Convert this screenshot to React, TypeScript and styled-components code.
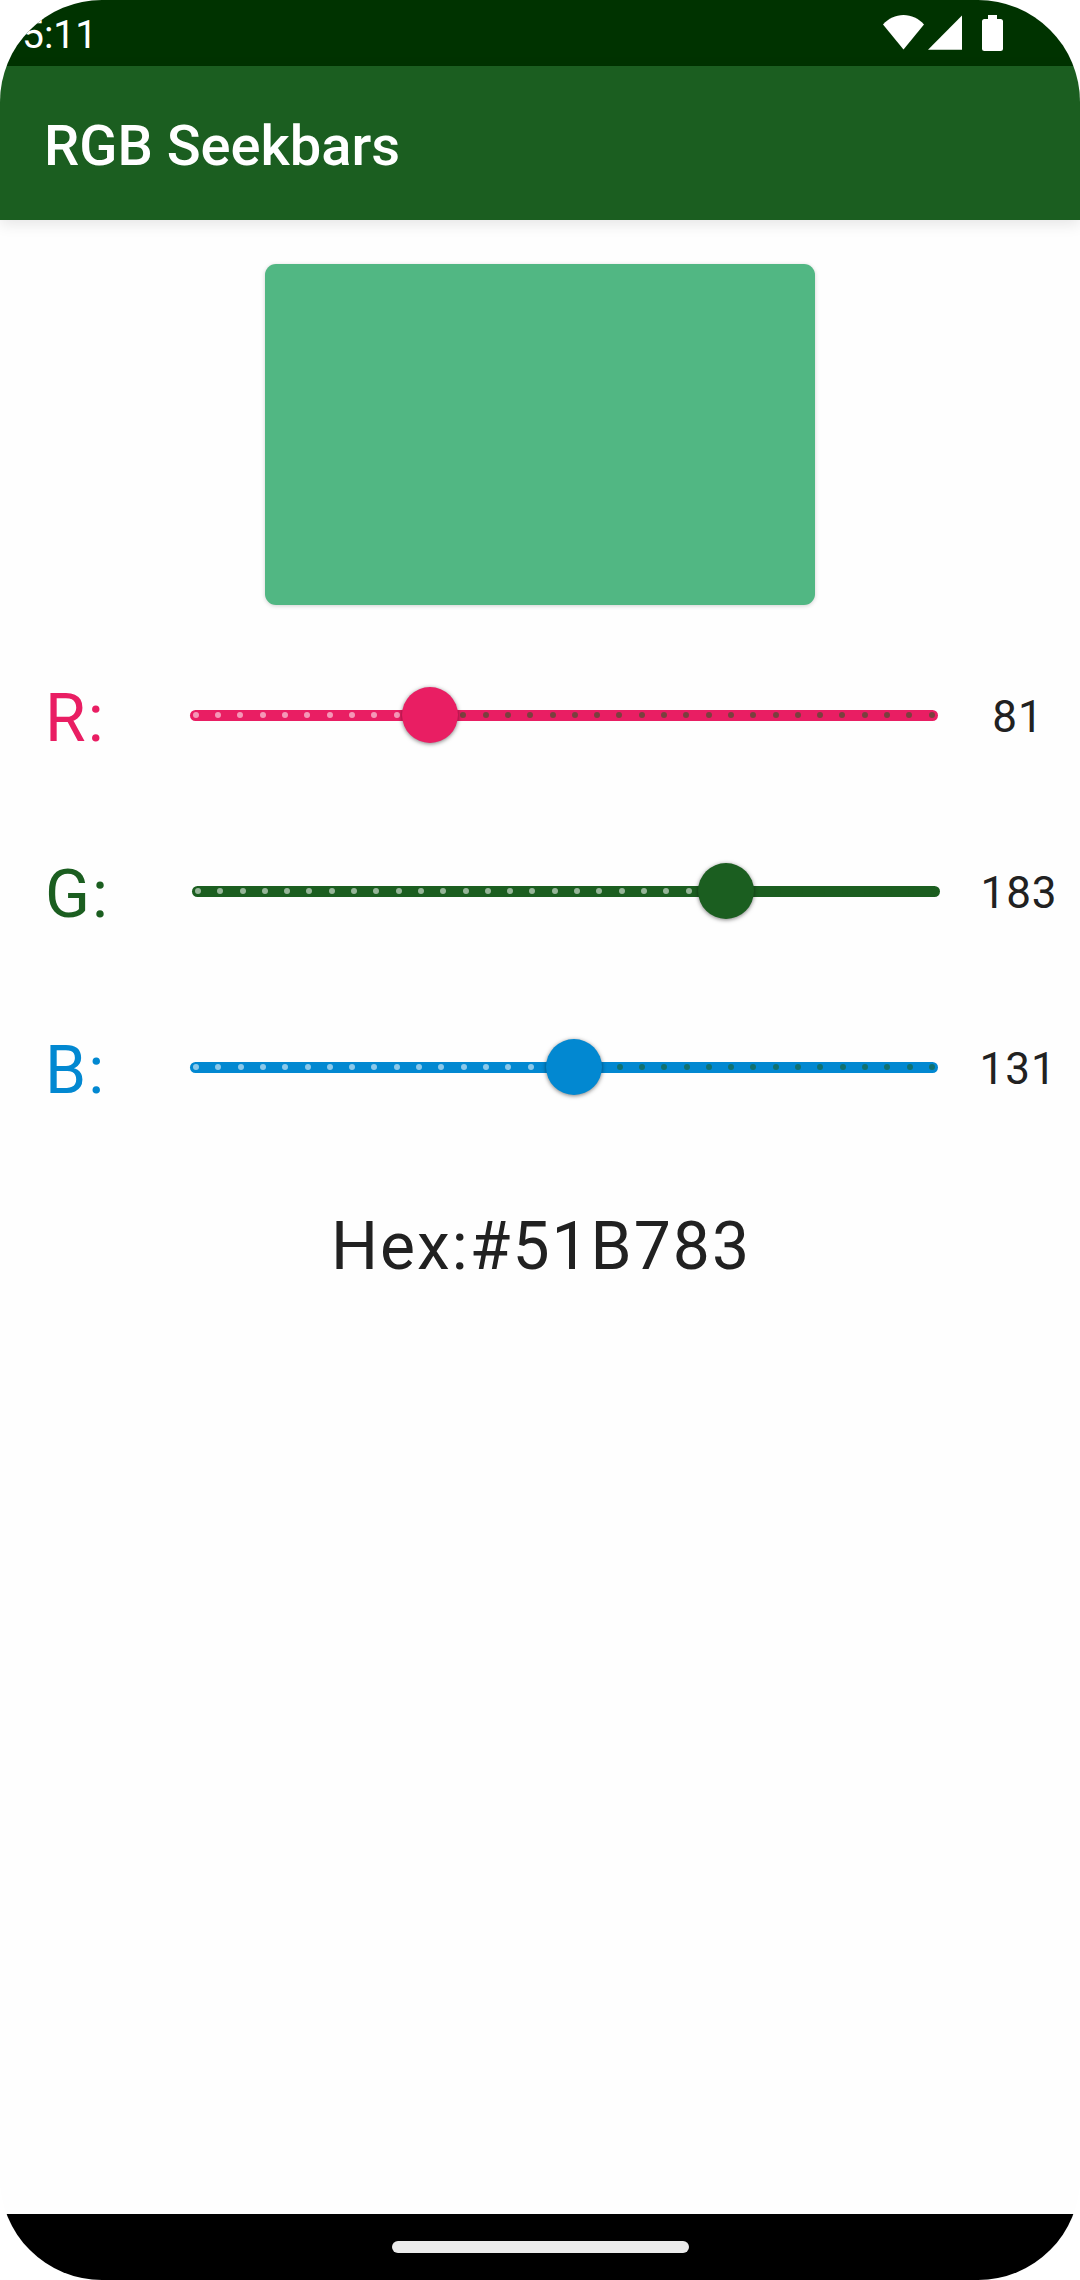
import React, { useState } from "react";
import styled, { createGlobalStyle } from "styled-components";

const GlobalStyle = createGlobalStyle`
  *, *::before, *::after { box-sizing: border-box; }
  body {
    margin: 0;
    background: #ffffff;
    color: #212121;
    font-family: Roboto, "Liberation Sans", sans-serif;
  }
`;

const Screen = styled.div`
  display: flex;
  flex-direction: column;
  min-height: 100vh;
  overflow: hidden;
  border-radius: 102px;
  background: #fefefe;
`;

const StatusBar = styled.div`
  display: flex;
  justify-content: space-between;
  align-items: flex-start;
  height: 66px;
  padding: 0 77px 0 22px;
  background: #003300;
  color: #ffffff;
`;

const Clock = styled.time`
  padding-top: 2px;
  font-size: 39px;
  line-height: 66px;
`;

const StatusIcons = styled.div`
  display: flex;
  align-items: flex-start;
  padding-top: 15px;
`;

const StatusIcon = styled.svg<{ $gap?: number }>`
  display: block;
  margin-left: ${(p) => p.$gap ?? 0}px;
  fill: #ffffff;
`;

const AppBar = styled.header`
  display: flex;
  align-items: center;
  height: 154px;
  padding: 6px 44px 0;
  background: #1b5e20;
  color: #ffffff;
  box-shadow: 0 4px 14px rgba(0, 0, 0, 0.1);
`;

const Title = styled.h1`
  margin: 0;
  font-size: 56px;
  font-weight: 500;
  line-height: 64px;
`;

const Content = styled.main`
  flex: 1;
  display: flex;
  flex-direction: column;
  align-items: center;
  padding-top: 44px;
`;

const Swatch = styled.div`
  width: 51%;
  aspect-ratio: 550 / 341;
  margin-bottom: 22px;
  border-radius: 11px;
  box-shadow: 0 1px 4px rgba(0, 0, 0, 0.18);
`;

const Row = styled.div`
  display: flex;
  align-items: center;
  width: 100%;
  height: 176px;
  padding: 0 4px 0 45px;
`;

const ChannelLabel = styled.label<{ $color: string }>`
  flex: 1 0 auto;
  padding-top: 8px;
  color: ${(p) => p.$color};
  font-size: 66px;
  line-height: 80px;
  letter-spacing: 2px;
`;

const SliderBox = styled.div`
  display: grid;
  align-items: center;
  width: calc(100% - 239px);

  & > * {
    grid-area: 1 / 1;
  }
`;

const Track = styled.div<{ $color: string }>`
  display: flex;
  justify-content: space-between;
  align-items: center;
  height: 11px;
  margin: 0 22px;
  padding: 0 3px;
  border-radius: 6px;
  background: ${(p) => p.$color};
`;

const Tick = styled.span<{ $active: boolean }>`
  width: 6px;
  height: 6px;
  border-radius: 50%;
  background: ${(p) => (p.$active ? "rgba(255, 255, 255, 0.54)" : "rgba(27, 94, 32, 0.54)")};
`;

const Range = styled.input<{ $color: string }>`
  appearance: none;
  width: 100%;
  height: 56px;
  margin: 0;
  background: transparent;
  cursor: pointer;

  &::-webkit-slider-thumb {
    appearance: none;
    width: 56px;
    height: 56px;
    border: 0;
    border-radius: 50%;
    background: ${(p) => p.$color};
    box-shadow: 0 1px 4px rgba(0, 0, 0, 0.5);
  }

  &::-moz-range-thumb {
    width: 56px;
    height: 56px;
    border: 0;
    border-radius: 50%;
    background: ${(p) => p.$color};
    box-shadow: 0 1px 4px rgba(0, 0, 0, 0.5);
  }
`;

const Value = styled.output`
  flex: 1 0 54px;
  padding-top: 4px;
  font-size: 44px;
  line-height: 52px;
  letter-spacing: 1px;
  text-align: center;
`;

const HexText = styled.p`
  margin: 52px 0 0;
  padding-left: 2px;
  font-size: 66px;
  line-height: 80px;
  letter-spacing: 2px;
`;

const NavBar = styled.footer`
  display: flex;
  align-items: center;
  justify-content: center;
  height: 66px;
  background: #000000;
`;

const HomeHandle = styled.div`
  width: 297px;
  height: 12px;
  border-radius: 6px;
  background: #ebebeb;
`;

const TICK_COUNT = 34;
const MAX = 255;

interface ChannelProps {
  name: string;
  color: string;
  value: number;
  onChange: (value: number) => void;
}

function Channel({ name, color, value, onChange }: ChannelProps) {
  const id = `channel-${name}`;
  return (
    <Row>
      <ChannelLabel htmlFor={id} $color={color}>
        {name}:
      </ChannelLabel>
      <SliderBox>
        <Track $color={color}>
          {Array.from({ length: TICK_COUNT }, (_, i) => (
            <Tick key={i} $active={i / (TICK_COUNT - 1) <= value / MAX} />
          ))}
        </Track>
        <Range
          id={id}
          type="range"
          min={0}
          max={MAX}
          value={value}
          $color={color}
          onChange={(e) => onChange(Number(e.target.value))}
        />
      </SliderBox>
      <Value htmlFor={id}>{value}</Value>
    </Row>
  );
}

const toHex = (n: number) => n.toString(16).toUpperCase().padStart(2, "0");

export default function App() {
  const [red, setRed] = useState(81);
  const [green, setGreen] = useState(183);
  const [blue, setBlue] = useState(131);
  const hex = `#${toHex(red)}${toHex(green)}${toHex(blue)}`;

  return (
    <>
      <GlobalStyle />
      <Screen>
        <StatusBar>
          <Clock>5:11</Clock>
          <StatusIcons>
            <StatusIcon width="41" height="35" viewBox="0 0 41 35" aria-hidden="true">
              <path d="M0 9.500C5.500 3.500 12.500 0 20.500 0S35.500 3.500 41 9.500L20.500 34.500Z" />
            </StatusIcon>
            <StatusIcon $gap={4} width="34" height="35" viewBox="0 0 34 35" aria-hidden="true">
              <path d="M34 .5V34.700H0Z" />
            </StatusIcon>
            <StatusIcon $gap={20} width="21" height="36" viewBox="0 0 21 36" aria-hidden="true">
              <path d="M6 0H15V4H18.500Q21 4 21 6.500V33.500Q21 36 18.500 36H2.500Q0 36 0 33.500V6.500Q0 4 2.500 4H6Z" />
            </StatusIcon>
          </StatusIcons>
        </StatusBar>
        <AppBar>
          <Title>RGB Seekbars</Title>
        </AppBar>
        <Content>
          <Swatch style={{ backgroundColor: hex }} />
          <Channel name="R" color="#e91e63" value={red} onChange={setRed} />
          <Channel name="G" color="#1b5e20" value={green} onChange={setGreen} />
          <Channel name="B" color="#0288d1" value={blue} onChange={setBlue} />
          <HexText>Hex:{hex}</HexText>
        </Content>
        <NavBar>
          <HomeHandle />
        </NavBar>
      </Screen>
    </>
  );
}
